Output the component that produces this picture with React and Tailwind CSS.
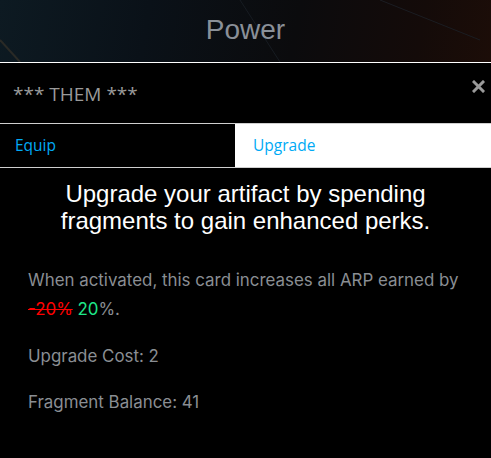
import React from "react";

export default function App() {
  return (
    <div className="w-[491px] h-[458px] bg-black overflow-hidden">
      <div className="relative h-[62px] flex items-center justify-center bg-[linear-gradient(100deg,#0d1a22_0%,#0a1118_30%,#0b0b0d_60%,#140b09_85%,#1c0d08_100%)]">
        <svg className="absolute inset-0" width="491" height="62">
          <line x1="240" y1="0" x2="280" y2="62" stroke="#171c22" strokeWidth="1" />
          <line x1="380" y1="0" x2="480" y2="40" stroke="#1b1d22" strokeWidth="1" />
          <line x1="0" y1="40" x2="20" y2="62" stroke="#2a2a26" strokeWidth="2" />
        </svg>
        <span className="relative text-[28px] text-[#8a9098] font-['Liberation_Sans',Arial,sans-serif] leading-none pb-[2px]">Power</span>
      </div>
      <div className="border-t border-white h-[61px] flex items-center justify-between pl-[13px] pr-[6px]">
        <span className="text-[19px] text-[#9a9a9a] font-['Open_Sans',sans-serif] pt-[2px]">*** THEM ***</span>
        <svg width="13" height="13" viewBox="0 0 13 13" className="self-start mt-[17px]">
          <path d="M2 2L11 11M11 2L2 11" stroke="#9a9a9a" strokeWidth="3" strokeLinecap="square" />
        </svg>
      </div>
      <div className="flex h-[45px] border-y border-[#cfcfcf] font-['Open_Sans',sans-serif] text-[15.5px] text-[#00aaf5]">
        <div className="w-[235px] bg-black flex items-center pl-[15px]">Equip</div>
        <div className="flex-1 bg-white flex items-center pl-[18px]">Upgrade</div>
      </div>
      <div className="pt-[12px] text-center text-white text-[24px] leading-[27px] font-['Liberation_Sans',Arial,sans-serif]">
        <p>Upgrade your artifact by spending</p>
        <p>fragments to gain enhanced perks.</p>
      </div>
      <div className="pl-[28px] pt-[32px] text-[16.9px] text-[#8a8e93] font-['Inter',sans-serif] leading-[29px]">
        <p className="mb-[18px]">
          When activated, this card increases all ARP earned by
          <br />
          <span className="text-[#ff0000] line-through">-20%</span>{" "}
          <span className="text-[#1ee68a]">20</span>%.
        </p>
        <p className="mb-[17px]">Upgrade Cost: 2</p>
        <p>Fragment Balance: 41</p>
      </div>
    </div>
  );
}
